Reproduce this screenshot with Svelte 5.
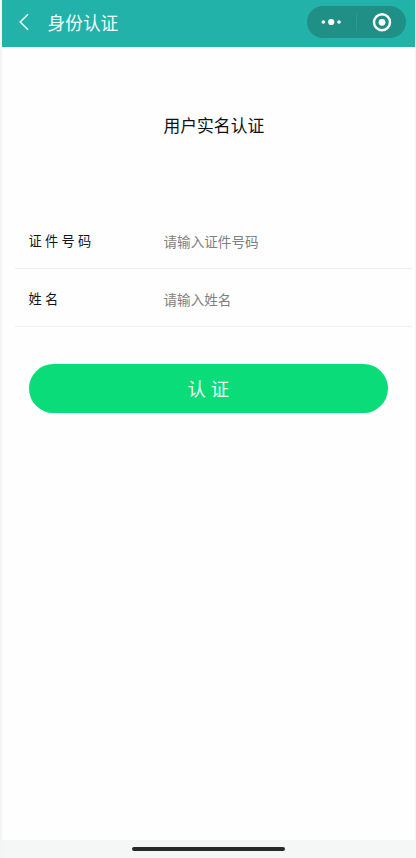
<script>
  const fields = [
    { id: 'idNumber', label: '证件号码', hint: '请输入证件号码' },
    { id: 'fullName', label: '姓名', hint: '请输入姓名' },
  ];
</script>

<div class="screen">
  <header>
    <svg class="back" width="10" height="18" viewBox="0 0 10 18" aria-hidden="true">
      <path d="M9 1.2 1.2 9 9 16.8" />
    </svg>
    <h1>身份认证</h1>
    <div class="capsule">
      <svg width="99" height="32" viewBox="0 0 99 32" aria-hidden="true">
        <circle cx="16.3" cy="16" r="1.8" />
        <circle cx="24.2" cy="16" r="3.1" />
        <circle cx="32" cy="16" r="1.8" />
        <path class="divider" d="M49.5 7v18" />
        <circle class="ring" cx="75" cy="16.3" r="8" />
        <circle cx="75" cy="16.3" r="3.4" />
      </svg>
    </div>
  </header>

  <main>
    <h2>用户实名认证</h2>
    <form>
      {#each fields as field (field.id)}
        <div class="row">
          <label for={field.id}>{field.label}</label>
          <input id={field.id} placeholder={field.hint} />
        </div>
      {/each}
      <button type="button">认证</button>
    </form>
  </main>

  <footer><div class="home"></div></footer>
</div>

<style>
  :global(body) {
    margin: 0;
    background: #f4f5f5;
  }
  .screen {
    box-sizing: border-box;
    width: 416px;
    height: 858px;
    padding: 0 1px 0 2px;
    display: flex;
    flex-direction: column;
    background: #f4f5f5;
    font-family: "Noto Sans CJK SC", sans-serif;
    overflow: hidden;
  }
  header {
    flex: none;
    height: 47px;
    box-sizing: border-box;
    padding: 0 9px 3px 17px;
    display: flex;
    align-items: center;
    background: #23b2aa;
  }
  .back {
    fill: none;
    stroke: #e9fffc;
    stroke-width: 1.5;
  }
  h1 {
    margin: 0 auto 0 18.5px;
    font-size: 17.7px;
    line-height: 26px;
    font-weight: 400;
    color: #f0fffd;
  }
  .capsule {
    height: 32px;
    width: 99px;
    border-radius: 16px;
    background: #209087;
  }
  .capsule svg {
    display: block;
    fill: #fff;
  }
  .capsule .divider {
    stroke: #2b9a91;
    stroke-width: 1;
  }
  .capsule .ring {
    fill: none;
    stroke: #fff;
    stroke-width: 2.4;
  }
  main {
    flex: 1;
    background: #fefefe;
  }
  h2 {
    margin: 65px 0 0 161.5px;
    font-size: 16.8px;
    line-height: 26px;
    font-weight: 400;
    color: #111;
  }
  form {
    padding: 73px 3px 0 13px;
  }
  .row {
    height: 58px;
    box-sizing: border-box;
    padding: 2px 0 0 13.5px;
    display: flex;
    align-items: center;
    border-bottom: 1px solid #f0f0f0;
  }
  label {
    width: 135px;
    font-size: 13.2px;
    letter-spacing: 3.3px;
    color: #151515;
  }
  input {
    flex: 1;
    min-width: 0;
    padding: 0;
    border: 0;
    outline: 0;
    background: none;
    font: 13.6px "Noto Sans CJK SC", sans-serif;
  }
  input::placeholder {
    color: #808080;
    opacity: 1;
  }
  button {
    display: block;
    width: 359px;
    height: 49px;
    margin: 37px 0 0 14.3px;
    padding: 0 0 2px 4px;
    border: 0;
    border-radius: 25px;
    background: #09dc78;
    color: #effff6;
    font: 18.4px "Noto Sans CJK SC", sans-serif;
    letter-spacing: 5px;
  }
  footer {
    flex: none;
    height: 18px;
    display: flex;
    justify-content: center;
    align-items: center;
    background: #f5f6f6;
  }
  .home {
    width: 153px;
    height: 4px;
    border-radius: 2px;
    background: #292929;
  }
</style>
